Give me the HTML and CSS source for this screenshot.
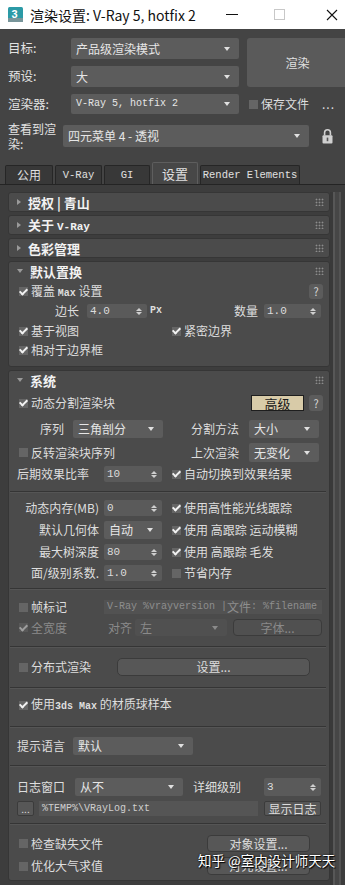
FILE: index.html
```html
<!DOCTYPE html>
<html lang="zh-CN">
<head>
    <meta charset="UTF-8">
    <meta name="viewport" content="width=device-width, initial-scale=1.0">
    <title>渲染设置: V-Ray 5, hotfix 2</title>
    <link rel="stylesheet" href="styles.css">
</head>
<body>
    <div class="titlebar">
        <svg class="app-icon" width="15" height="15" viewBox="0 0 15 15">
            <rect x="0" y="0" width="15" height="15" rx="1.5" fill="#2b9aa6"/>
            <rect x="0" y="11" width="15" height="4" fill="#78959a"/>
            <text x="3.5" y="11" font-size="11" font-weight="bold" fill="#fff" font-family="Liberation Sans, sans-serif">3</text>
        </svg>
        <span class="title">渲染设置: V-Ray 5, hotfix 2</span>
        <span class="win-btn win-min"></span>
        <span class="win-btn win-max"></span>
        <svg class="win-btn win-close" width="12" height="12" viewBox="0 0 12 12">
            <path d="M1 1L11 11M11 1L1 11" stroke="#111" stroke-width="1.1"/>
        </svg>
    </div>

    <div class="top">
        <div class="top-grid">
            <span class="label">目标:</span>
            <div class="dropdown">产品级渲染模式</div>
            <button class="render-btn">渲染</button>
            <span class="label">预设:</span>
            <div class="dropdown">大</div>
            <span class="label">渲染器:</span>
            <div class="dropdown mono">V-Ray 5, hotfix 2</div>
            <div class="save-file">
                <span class="cb"></span>
                <span>保存文件</span>
                <span class="more">...</span>
            </div>
        </div>
        <div class="view-row">
            <span class="label two-line">查看到渲<br>染:</span>
            <div class="dropdown view-dd">四元菜单 4 - 透视</div>
            <svg class="lock" width="11" height="16" viewBox="0 0 11 16">
                <path d="M2.6 7.5V4.6a2.9 2.9 0 0 1 5.8 0v2.9" fill="none" stroke="#d0d0d0" stroke-width="1.6"/>
                <rect x="0.5" y="7.2" width="10" height="8.3" rx="1" fill="#d0d0d0"/>
                <rect x="4.7" y="9.6" width="1.6" height="3.6" fill="#555"/>
            </svg>
        </div>
    </div>

    <div class="tabs">
        <div class="tab t-common">公用</div>
        <div class="tab t-vray mono">V-Ray</div>
        <div class="tab t-gi mono">GI</div>
        <div class="tab t-settings active">设置</div>
        <div class="tab t-re mono">Render Elements</div>
    </div>

    <div class="panel-area">
        <div class="rollouts">
            <div class="rollout">
                <div class="rollout-head"><i class="tri"></i><span>授权 | 青山</span><i class="grip"></i></div>
            </div>
            <div class="rollout">
                <div class="rollout-head"><i class="tri"></i><span>关于 <span class="mono head-mono">V-Ray</span></span><i class="grip"></i></div>
            </div>
            <div class="rollout">
                <div class="rollout-head"><i class="tri"></i><span>色彩管理</span><i class="grip"></i></div>
            </div>

            <!-- default displacement -->
            <div class="rollout open">
                <div class="rollout-head"><i class="tri"></i><span>默认置换</span><i class="grip"></i></div>
                <div class="row h15 mt4">
                    <span class="cb on"></span><span>覆盖 <span class="mono b">Max</span> 设置</span>
                    <button class="btn-help">?</button>
                </div>
                <div class="row flush h14 mt5">
                    <span class="edge-label">边长</span>
                    <div class="spinner sp-edge">4.0<span class="updown"></span></div>
                    <span class="mono b px">Px</span>
                    <span class="amount-label">数量</span>
                    <div class="spinner sp-amount">1.0<span class="updown"></span></div>
                </div>
                <div class="row h16 mt5">
                    <span class="half"><span class="cb on"></span>基于视图</span>
                    <span class="cb on"></span><span>紧密边界</span>
                </div>
                <div class="row h16 mt3">
                    <span class="cb on"></span><span>相对于边界框</span>
                </div>
            </div>

            <!-- system -->
            <div class="rollout open system">
                <div class="rollout-head"><i class="tri"></i><span>系统</span><i class="grip"></i></div>
                <div class="row h16 mt6">
                    <span class="cb on"></span><span>动态分割渲染块</span>
                    <button class="btn-adv">高级</button>
                    <button class="btn-help gap5">?</button>
                </div>
                <div class="row h18 mt9">
                    <span class="seq-label">序列</span>
                    <div class="dropdown dd-seq">三角剖分</div>
                    <div class="pair">
                        <span class="pair-label">分割方法</span>
                        <div class="dropdown dd-pair">大小</div>
                    </div>
                </div>
                <div class="row h19 mt5">
                    <span class="cb"></span><span>反转渲染块序列</span>
                    <div class="pair">
                        <span class="pair-label">上次渲染</span>
                        <div class="dropdown dd-pair">无变化</div>
                    </div>
                </div>
                <div class="row flush h16 mt4">
                    <span class="col-label left">后期效果比率</span>
                    <div class="spinner col-ctl">10<span class="updown"></span></div>
                    <span class="cb on col-cb"></span><span>自动切换到效果结果</span>
                </div>

                <div class="sep mt9"></div>

                <div class="row flush h16 mt7">
                    <span class="col-label">动态内存(MB)</span>
                    <div class="spinner col-ctl">0<span class="updown"></span></div>
                    <span class="cb on col-cb"></span><span>使用高性能光线跟踪</span>
                </div>
                <div class="row flush h18 mt5">
                    <span class="col-label">默认几何体</span>
                    <div class="dropdown col-ctl">自动</div>
                    <span class="cb on col-cb"></span><span>使用 高跟踪 运动模糊</span>
                </div>
                <div class="row flush h16 mt5">
                    <span class="col-label">最大树深度</span>
                    <div class="spinner col-ctl">80<span class="updown"></span></div>
                    <span class="cb on col-cb"></span><span>使用 高跟踪 毛发</span>
                </div>
                <div class="row flush h16 mt5">
                    <span class="col-label">面/级别系数.</span>
                    <div class="spinner col-ctl">1.0<span class="updown"></span></div>
                    <span class="cb col-cb"></span><span>节省内存</span>
                </div>

                <div class="sep mt7"></div>

                <div class="row h16 mt9">
                    <span class="cb"></span><span>帧标记</span>
                    <div class="field stamp"><span class="mono">V-Ray %vrayversion | </span>文件<span class="mono">: %filename</span></div>
                </div>
                <div class="row h17 mt4">
                    <span class="cb on dim"></span><span class="dim-text">全宽度</span>
                    <div class="align-group">
                        <span class="dim-text align-label">对齐</span>
                        <div class="dropdown disabled dd-align">左</div>
                        <button class="btn disabled btn-font">字体...</button>
                    </div>
                </div>

                <div class="sep mt10"></div>

                <div class="row h18 mt10">
                    <span class="cb"></span><span>分布式渲染</span>
                    <button class="btn btn-dr">设置...</button>
                </div>

                <div class="sep mt11"></div>

                <div class="row h16 mt8">
                    <span class="cb on"></span><span>使用<span class="mono b">3ds Max</span> 的材质球样本</span>
                </div>

                <div class="sep mt13"></div>

                <div class="row pl8 h18 mt9">
                    <span>提示语言</span>
                    <div class="dropdown dd-lang">默认</div>
                </div>

                <div class="sep mt10"></div>

                <div class="row pl8 h18 mt11">
                    <span>日志窗口</span>
                    <div class="dropdown dd-log">从不</div>
                    <span class="detail-label">详细级别</span>
                    <div class="spinner sp-level">3<span class="updown"></span></div>
                </div>
                <div class="row pl8 h15 mt5">
                    <button class="btn btn-dots">...</button>
                    <div class="field log-path mono">%TEMP%\VRayLog.txt</div>
                    <button class="btn btn-showlog">显示日志</button>
                </div>

                <div class="sep mt7"></div>

                <div class="row h17 mt10">
                    <span class="cb"></span><span>检查缺失文件</span>
                    <button class="btn btn-obj">对象设置...</button>
                </div>
                <div class="row h18 mt5">
                    <span class="cb"></span><span>优化大气求值</span>
                    <button class="btn btn-obj">灯光设置...</button>
                </div>
            </div>
        </div>
        <div class="scrollbar"></div>
    </div>

    <div class="watermark">知乎 @室内设计师天天</div>
</body>
</html>
```

FILE: styles.css
```css
* {
    margin: 0;
    padding: 0;
    box-sizing: border-box;
}

body {
    width: 345px;
    height: 885px;
    overflow: hidden;
    position: relative;
    background: #444444;
    font-family: "Noto Sans CJK SC", "Noto Sans", sans-serif;
    font-size: 12px;
    line-height: 1;
    color: #dedede;
}

button {
    font: inherit;
    color: inherit;
    border: none;
    background: none;
}

.mono {
    font-family: "Liberation Mono", "DejaVu Sans Mono", monospace;
    font-size: 10px;
}

.b {
    font-weight: bold;
}

/* title bar */
.titlebar {
    height: 29px;
    background: #ffffff;
    display: flex;
    align-items: center;
    color: #111;
}

.app-icon {
    margin-left: 8px;
}

.title {
    margin-left: 7px;
    font-size: 14px;
}

.win-btn {
    display: block;
    flex: none;
}

.win-min {
    margin-left: auto;
    width: 12px;
    height: 1px;
    background: #111;
}

.win-max {
    margin-left: 36px;
    width: 11px;
    height: 11px;
    border: 1px solid #c8c8c8;
}

.win-close {
    margin-left: 41px;
    margin-right: 7px;
}

/* top settings */
.top {
    padding: 9px 0 0 8px;
}

.top-grid {
    display: grid;
    grid-template-columns: 55px 168px 101px;
    grid-template-rows: 21px 21px 20px;
    column-gap: 8px;
    row-gap: 7px;
    align-items: center;
}

.label {
    font-size: 12.5px;
    color: #e2e2e2;
}

.dropdown {
    display: flex;
    align-items: center;
    height: 100%;
    padding-left: 5px;
    background: #5c5c5c;
    border-radius: 2px;
    color: #e6e6e6;
    white-space: nowrap;
    overflow: hidden;
    flex: none;
}

.dropdown::after {
    content: "";
    flex: none;
    margin-left: auto;
    margin-right: 9px;
    border-left: 3px solid transparent;
    border-right: 3px solid transparent;
    border-top: 4px solid #e0e0e0;
}

.render-btn {
    grid-row: span 2;
    align-self: stretch;
    background: #5a5a5a;
    border-radius: 3px;
    color: #e0e0e0;
}

.save-file {
    display: flex;
    align-items: center;
    padding-left: 2px;
}

.more {
    margin-left: auto;
    margin-right: 13px;
    letter-spacing: 1px;
}

.view-row {
    display: flex;
    align-items: center;
    height: 24px;
    margin-top: 10px;
}

.two-line {
    width: 55px;
    font-size: 12px;
    line-height: 15px;
}

.view-dd {
    width: 246px;
    height: 22px;
}

.lock {
    margin-left: 13px;
}

/* tabs */
.tabs {
    display: flex;
    align-items: flex-end;
    gap: 2px;
    height: 23px;
    margin-top: 14px;
    padding-left: 5px;
    border-bottom: 1px solid #242424;
}

.tab {
    height: 19px;
    display: flex;
    align-items: center;
    justify-content: center;
    background: #383838;
    border: 1px solid #262626;
    border-bottom: none;
    border-radius: 2px 2px 0 0;
    color: #e0e0e0;
}

.tab.mono {
    font-size: 10.5px;
}

.tab.active {
    height: 22px;
    background: #474747;
    border-color: #5e5e5e;
    font-size: 13px;
}

.t-common { width: 48px; }
.t-vray { width: 47px; }
.t-gi { width: 46px; }
.t-settings { width: 46px; }
.t-re { width: 100px; }

/* rollouts */
.panel-area {
    display: flex;
    height: 700px;
    padding-top: 7px;
    background: #3d3d3d;
}

.rollouts {
    width: 322px;
    margin-left: 8px;
    flex: none;
}

.scrollbar {
    flex: none;
    width: 15px;
    background: linear-gradient(to right, #393939 0 3px, #575757 3px 5px, #464646 5px 9px, #535353 9px 11px, #3c3c3c 11px);
}

.rollout {
    background: #4b4b4b;
    border: 1px solid #363636;
    border-radius: 3px;
    margin-bottom: 3px;
}

.rollout.open {
    padding-bottom: 8px;
}

.rollout.system {
    padding-bottom: 5px;
}

.rollout-head {
    height: 18px;
    display: flex;
    align-items: center;
    padding: 0 5px 0 8px;
    font-size: 13px;
    font-weight: bold;
    color: #f2f2f2;
}

.head-mono {
    font-size: 11px;
}

.tri {
    width: 0;
    height: 0;
    margin-right: 7px;
    border-top: 3px solid transparent;
    border-bottom: 3px solid transparent;
    border-left: 4px solid #9a9a9a;
}

.open .tri {
    border-left: 3px solid transparent;
    border-right: 3px solid transparent;
    border-top: 4px solid #9a9a9a;
    border-bottom: 0;
}

.grip {
    margin-left: auto;
    width: 9px;
    height: 8px;
    background-image: radial-gradient(circle, #8c8c8c 0.8px, transparent 1.1px);
    background-size: 3px 3px;
}

.row {
    display: flex;
    align-items: center;
    padding: 0 6px 0 10px;
    white-space: nowrap;
}

.row.flush { padding-left: 0; }
.row.pl8 { padding-left: 8px; }

.h14 { height: 14px; }
.h15 { height: 15px; }
.h16 { height: 16px; }
.h17 { height: 17px; }
.h18 { height: 18px; }
.h19 { height: 19px; }

.mt3 { margin-top: 3px; }
.mt4 { margin-top: 4px; }
.mt5 { margin-top: 5px; }
.mt6 { margin-top: 6px; }
.mt7 { margin-top: 7px; }
.mt8 { margin-top: 8px; }
.mt9 { margin-top: 9px; }
.mt10 { margin-top: 10px; }
.mt11 { margin-top: 11px; }
.mt13 { margin-top: 13px; }

.sep {
    height: 2px;
    margin-left: 1px;
    margin-right: 3px;
    border-top: 1px solid #353535;
    border-bottom: 1px solid #555555;
}

/* controls */
.cb {
    flex: none;
    width: 9px;
    height: 9px;
    margin-right: 3px;
    background: #656565;
    display: flex;
    align-items: center;
    justify-content: center;
}

.cb.on::after {
    content: "";
    width: 3px;
    height: 6px;
    border: solid #f2f2f2;
    border-width: 0 2px 2px 0;
    transform: translateY(-1px) rotate(45deg);
}

.cb.dim {
    opacity: 0.5;
}

.dim-text {
    color: #8a8a8a;
}

.spinner {
    flex: none;
    display: flex;
    align-items: center;
    height: 100%;
    padding-left: 3px;
    background: #5a5a5a;
    border-radius: 2px;
    font-family: "Liberation Mono", "DejaVu Sans Mono", monospace;
    font-size: 11px;
    color: #dcdcdc;
}

.updown {
    margin-left: auto;
    margin-right: 5px;
    display: flex;
    flex-direction: column;
    gap: 1px;
}

.updown::before,
.updown::after {
    content: "";
    border-left: 3px solid transparent;
    border-right: 3px solid transparent;
}

.updown::before { border-bottom: 3px solid #cfcfcf; }
.updown::after { border-top: 3px solid #cfcfcf; }

.btn {
    flex: none;
    height: 100%;
    background: #575757;
    border: 1px solid #3b3b3b;
    border-radius: 4px;
    color: #dcdcdc;
}

.btn.disabled,
.dropdown.disabled {
    background: #505050;
    color: #8a8a8a;
}

.dropdown.disabled::after {
    border-top-color: #8a8a8a;
}

.btn-help {
    flex: none;
    margin-left: auto;
    width: 14px;
    height: 15px;
    background: #5c5c5c;
    border-radius: 3px;
    font-size: 11px;
    color: #d8d8d8;
}

.btn-help.gap5 {
    margin-left: 5px;
    height: 16px;
}

.btn-adv {
    flex: none;
    margin-left: auto;
    width: 53px;
    height: 16px;
    background: #d8cba8;
    border: 1px solid #1e1e1e;
    color: #1a1a1a;
    font-size: 13px;
}

.field {
    flex: none;
    display: flex;
    align-items: center;
    height: 100%;
    padding-left: 3px;
    background: #525252;
    color: #8e8e8e;
    overflow: hidden;
    white-space: nowrap;
}

/* default displacement */
.edge-label { margin-left: 46px; }
.sp-edge { margin-left: 8px; width: 60px; }
.px { margin-left: 3px; }
.amount-label { margin-left: auto; }
.sp-amount { margin-left: 6px; width: 57px; margin-right: 2px; }

.half {
    display: flex;
    align-items: center;
    width: 153px;
}

/* system */
.seq-label { margin-left: 21px; }
.dd-seq { margin-left: 9px; width: 90px; }

.pair {
    display: flex;
    align-items: center;
    height: 100%;
    margin-left: auto;
    margin-right: 4px;
}

.pair-label { width: 58px; }
.dd-pair { width: 70px; }

.col-label {
    flex: none;
    width: 91px;
    text-align: right;
    padding-right: 1px;
}

.col-label.left {
    text-align: left;
    padding-left: 8px;
}

.col-ctl { margin-left: 4px; width: 58px; }
.col-cb { margin-left: 10px; }

.stamp {
    margin-left: auto;
    margin-right: 1px;
    width: 218px;
    height: 14px;
}

.align-group {
    display: flex;
    align-items: center;
    height: 100%;
    margin-left: auto;
    margin-right: 1px;
}

.align-label { width: 27px; }
.dd-align { width: 92px; }
.btn-font { margin-left: 6px; width: 89px; }

.btn-dr {
    margin-left: auto;
    margin-right: 13px;
    width: 193px;
    border-radius: 5px;
}

.dd-lang { margin-left: 8px; width: 120px; }
.dd-log { margin-left: 10px; width: 108px; }
.detail-label { margin-left: 10px; }
.sp-level { margin-left: auto; margin-right: 2px; width: 57px; }

.btn-dots {
    width: 17px;
    border-radius: 2px;
    font-size: 10px;
}

.log-path {
    margin-left: 5px;
    width: 219px;
    color: #cfcfcf;
    background: #555555;
}

.btn-showlog {
    margin-left: auto;
    margin-right: 2px;
    width: 57px;
    border-radius: 2px;
}

.btn-obj {
    margin-left: auto;
    margin-right: 13px;
    width: 103px;
}

.watermark {
    position: absolute;
    left: 198px;
    top: 854px;
    font-size: 13.5px;
    color: #ffffff;
    white-space: nowrap;
    text-shadow: 0 0 2px #000, 1px 1px 1px #000;
}
```
